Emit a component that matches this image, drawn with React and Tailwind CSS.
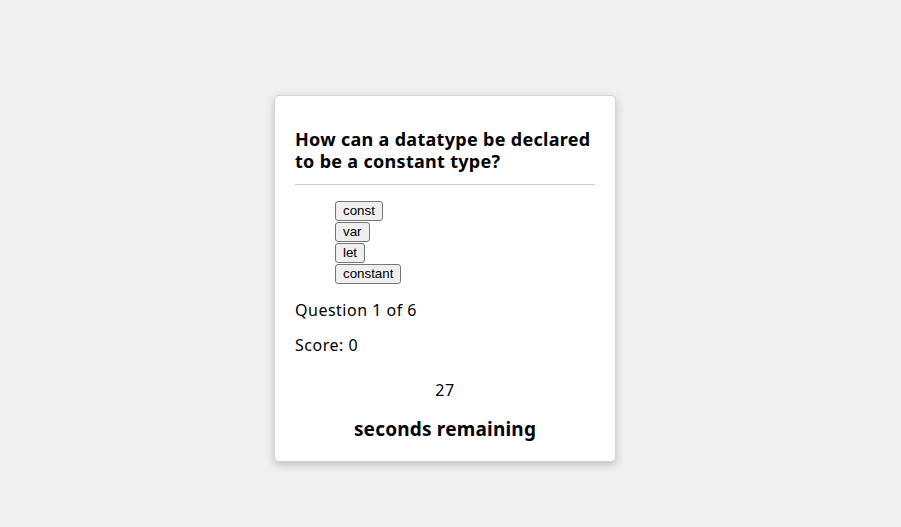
import React, { useState } from 'react'

const options = ['const', 'var', 'let', 'constant'];

const App = () => {
  const [score] = useState(0);

  return (
    <div className="min-h-[527px] bg-[#f0f0f0] pt-[95px] pr-[11px] flex justify-center items-start">
      <div
        className="w-[342px] bg-white rounded-[5px] border border-[#d4d4d4] shadow-[0_3px_8px_rgba(0,0,0,0.2)] px-5 pt-[32px] pb-[19px] text-black"
        style={{ fontFamily: '"Noto Sans", sans-serif' }}
      >
        {/* Question */}
        <h2 className="text-[18px] font-bold leading-[22px] tracking-[0.3px] pb-[12px] border-b border-[#cccccc]">
          How can a datatype be declared to be a constant type?
        </h2>

        {/* Answers */}
        <div className="pl-10 mt-4 flex flex-col items-start gap-px">
          {options.map((opt) => (
            <button
              key={opt}
              className="bg-[#efefef] border border-[#767676] rounded-[3px] px-[7px] h-[20px] text-[13.33px] leading-[18px] text-black"
              style={{ fontFamily: '"Liberation Sans", Arial, sans-serif' }}
            >
              {opt}
            </button>
          ))}
        </div>

        <p className="text-[16px] tracking-[0.5px] mt-[15px] leading-[22px]">Question 1 of 6</p>
        <p className="text-[16px] tracking-[0.5px] mt-[13px] leading-[22px]">Score: {score}</p>

        {/* Timer */}
        <p className="text-[16px] tracking-[0.5px] text-center mt-[23px] leading-[22px]">27</p>
        <p className="text-[19px] font-bold tracking-[0.2px] text-center mt-[15px] leading-[26px]">seconds remaining</p>
      </div>
    </div>
  )
}

export default App
